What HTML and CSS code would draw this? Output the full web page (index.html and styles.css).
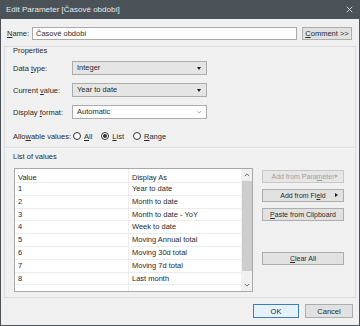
FILE: index.html
```html
<!DOCTYPE html>
<html lang="cs">
  <head>
    <meta charset="UTF-8" />
    <title>Edit Parameter</title>
    <link rel="stylesheet" href="styles.css">
  </head>
  <body>
    <div class="dialog">
      <div class="titlebar">
        <span class="title">Edit Parameter [Časové období]</span>
        <svg class="close" viewBox="0 0 10 10">
          <path d="M1 1L9 9M9 1L1 9" />
        </svg>
      </div>

      <div class="name-row">
        <label class="name-label"><u>N</u>ame:</label>
        <div class="textbox">Časové období</div>
        <button class="btn comment-btn"><u>C</u>omment &gt;&gt;</button>
      </div>

      <div class="panel">
        <div class="section-title">Properties</div>

        <div class="prop-row row-data">
          <label class="prop-label">Data <u>t</u>ype:</label>
          <div class="select">Integer<span class="caret"></span></div>
        </div>
        <div class="prop-row row-current">
          <label class="prop-label">Current <u>v</u>alue:</label>
          <div class="select">Year to date<span class="caret"></span></div>
        </div>
        <div class="prop-row row-format">
          <label class="prop-label">Display <u>f</u>ormat:</label>
          <div class="combo">Automatic
            <svg class="chev" viewBox="0 0 8 5"><path d="M1 1l3 3 3-3" /></svg>
          </div>
        </div>
        <div class="prop-row row-allow">
          <label class="allow-label">Allo<u>w</u>able values:</label>
          <span class="radio"></span><span class="radio-text"><u>A</u>ll</span>
          <span class="radio checked"></span><span class="radio-text"><u>L</u>ist</span>
          <span class="radio"></span><span class="radio-text"><u>R</u>ange</span>
        </div>

        <div class="separator"></div>
        <div class="section-title list-title">List of values</div>

        <div class="list-area">
          <div class="listbox">
            <div class="grid">
              <div class="grid-row head"><span class="c1">Value</span><span class="c2">Display As</span></div>
              <div class="grid-row"><span class="c1">1</span><span class="c2">Year to date</span></div>
              <div class="grid-row"><span class="c1">2</span><span class="c2">Month to date</span></div>
              <div class="grid-row"><span class="c1">3</span><span class="c2">Month to date - YoY</span></div>
              <div class="grid-row"><span class="c1">4</span><span class="c2">Week to date</span></div>
              <div class="grid-row"><span class="c1">5</span><span class="c2">Moving Annual total</span></div>
              <div class="grid-row"><span class="c1">6</span><span class="c2">Moving 30d total</span></div>
              <div class="grid-row"><span class="c1">7</span><span class="c2">Moving 7d total</span></div>
              <div class="grid-row"><span class="c1">8</span><span class="c2">Last month</span></div>
              <div class="grid-row partial"><span class="c1">...</span><span class="c2"></span></div>
            </div>
            <div class="scrollbar">
              <svg class="sarrow" viewBox="0 0 8 5"><path d="M1 4l3-3 3 3" /></svg>
              <div class="thumb"></div>
              <svg class="sarrow" viewBox="0 0 8 5"><path d="M1 1l3 3 3-3" /></svg>
            </div>
          </div>

          <div class="side-buttons">
            <button class="btn side disabled">Add from Para<u>m</u>eter <span class="tri"></span></button>
            <button class="btn side">Add from Fi<u>e</u>ld <span class="tri"></span></button>
            <button class="btn side"><u>P</u>aste from Clipboard</button>
            <button class="btn side clear"><u>C</u>lear All</button>
          </div>
        </div>
      </div>

      <div class="footer">
        <button class="btn ok">OK</button>
        <button class="btn cancel">Cancel</button>
      </div>
    </div>
  </body>
</html>
```

FILE: styles.css
```css
* {
    box-sizing: border-box;
}
body {
    margin: 0;
    width: 360px;
    height: 326px;
    overflow: hidden;
    background-color: #f0f0f0;
    font-family: "Liberation Sans", Arial, sans-serif;
    font-size: 7.5px;
    color: #2a2a2a;
}
u {
    text-decoration: underline;
    text-underline-offset: 1px;
}
.dialog {
    width: 360px;
    height: 326px;
    border: 1px solid #4b5359;
    border-top: none;
    background-color: #f0f0f0;
}
.titlebar {
    height: 19px;
    background-color: #4b5359;
    display: flex;
    align-items: center;
    justify-content: space-between;
    padding: 0 6px 0 5px;
}
.title {
    color: #e6e8e9;
    font-size: 8px;
}
.close {
    width: 7px;
    height: 7px;
    stroke: #e6e8e9;
    stroke-width: 1.2;
}

/* name row */
.name-row {
    display: flex;
    align-items: center;
    height: 13px;
    margin-top: 8px;
    padding-left: 6px;
}
.name-label {
    width: 25px;
}
.textbox {
    width: 265px;
    height: 13px;
    background-color: #fff;
    border: 1px solid #a9a9a9;
    padding-left: 3px;
    line-height: 11px;
}
.btn {
    font-family: inherit;
    font-size: 7.5px;
    color: #2a2a2a;
    background-color: #e1e1e1;
    border: 1px solid #adadad;
    padding: 0;
    height: 13px;
    line-height: 11px;
}
.comment-btn {
    width: 50px;
    margin-left: 5px;
}

/* properties panel */
.panel {
    margin: 6px 3px 0 3px;
    height: 252px;
    border: 1px solid #dcdcdc;
    padding: 0 8px;
}
.section-title {
    height: 8px;
    line-height: 8px;
    margin-top: 0;
}
.prop-row {
    display: flex;
    align-items: center;
    height: 14px;
}
.row-data {
    margin-top: 6px;
}
.row-current,
.row-format {
    margin-top: 8px;
}
.row-allow {
    margin-top: 11px;
    height: 12px;
}
.prop-label {
    width: 59px;
}
.allow-label {
    width: 60px;
}
.select,
.combo {
    position: relative;
    width: 135px;
    height: 14px;
    line-height: 12px;
    padding-left: 4px;
    background-color: #e5e5e5;
    border: 1px solid #acacac;
}
.combo {
    background-color: #fff;
}
.caret {
    position: absolute;
    right: 5px;
    top: 5px;
    border-left: 2.5px solid transparent;
    border-right: 2.5px solid transparent;
    border-top: 3px solid #1e1e1e;
}
.chev {
    position: absolute;
    right: 4px;
    top: 4px;
    width: 6px;
    height: 4px;
    fill: none;
    stroke: #9a9a9a;
    stroke-width: 1;
}
.radio {
    width: 8px;
    height: 8px;
    border: 1px solid #333;
    border-radius: 50%;
    background-color: #fff;
    display: flex;
    align-items: center;
    justify-content: center;
    margin-right: 3px;
}
.radio.checked::after {
    content: "";
    width: 4px;
    height: 4px;
    border-radius: 50%;
    background-color: #333;
}
.radio-text {
    margin-right: 9px;
}
.separator {
    height: 1px;
    background-color: #dcdcdc;
    margin: 5px -8px 0 -8px;
    border-bottom: 1px solid #fafafa;
    box-sizing: content-box;
}
.list-title {
    margin-top: 4px;
}

/* list of values */
.list-area {
    display: flex;
    margin-top: 7px;
    padding-left: 1px;
}
.listbox {
    width: 239px;
    height: 124px;
    background-color: #fff;
    border: 1px solid #a9a9a9;
    display: flex;
    overflow: hidden;
}
.grid {
    flex: 1;
    position: relative;
}
.grid::before {
    content: "";
    position: absolute;
    left: 113px;
    top: 0;
    bottom: 0;
    border-left: 1px solid #ececec;
}
.grid-row {
    display: flex;
    height: 12.8px;
    line-height: 12px;
    border-bottom: 1px solid #ececec;
}
.grid-row.head {
    height: 14px;
    line-height: 17px;
}
.grid-row.partial {
    color: #9a9a9a;
    border-bottom: none;
    line-height: 11px;
}
.c1 {
    width: 113px;
    padding-left: 3px;
}
.c2 {
    padding-left: 4px;
}
.scrollbar {
    width: 11px;
    background-color: #f0f0f0;
    display: flex;
    flex-direction: column;
    align-items: center;
}
.sarrow {
    width: 6px;
    height: 4px;
    margin: 4px 0;
    fill: none;
    stroke: #606060;
    stroke-width: 1.2;
}
.thumb {
    width: 10px;
    height: 90px;
    background-color: #cdcdcd;
    margin-bottom: auto;
}
.side-buttons {
    display: flex;
    flex-direction: column;
    margin-left: 9px;
    width: 82px;
    margin-top: 2px;
}
.btn.side {
    width: 82px;
    margin-bottom: 6px;
    position: relative;
    font-size: 7px;
}
.btn.disabled {
    color: #a0a0a0;
    border-color: #c8c8c8;
    background-color: #e6e6e6;
}
.tri {
    position: absolute;
    right: 5px;
    top: 3px;
    border-top: 2.5px solid transparent;
    border-bottom: 2.5px solid transparent;
    border-left: 3px solid #1e1e1e;
}
.btn.disabled .tri {
    border-left-color: #b0b0b0;
}
.btn.clear {
    margin-top: 25px;
}

/* footer */
.footer {
    display: flex;
    justify-content: flex-end;
    padding-right: 6px;
    margin-top: 6px;
}
.ok,
.cancel {
    height: 14px;
    width: 46px;
}
.ok {
    border-color: #3c7fb1;
    background-color: #e5f1fb;
    margin-right: 6px;
}
.cancel {
    width: 48px;
}
```
